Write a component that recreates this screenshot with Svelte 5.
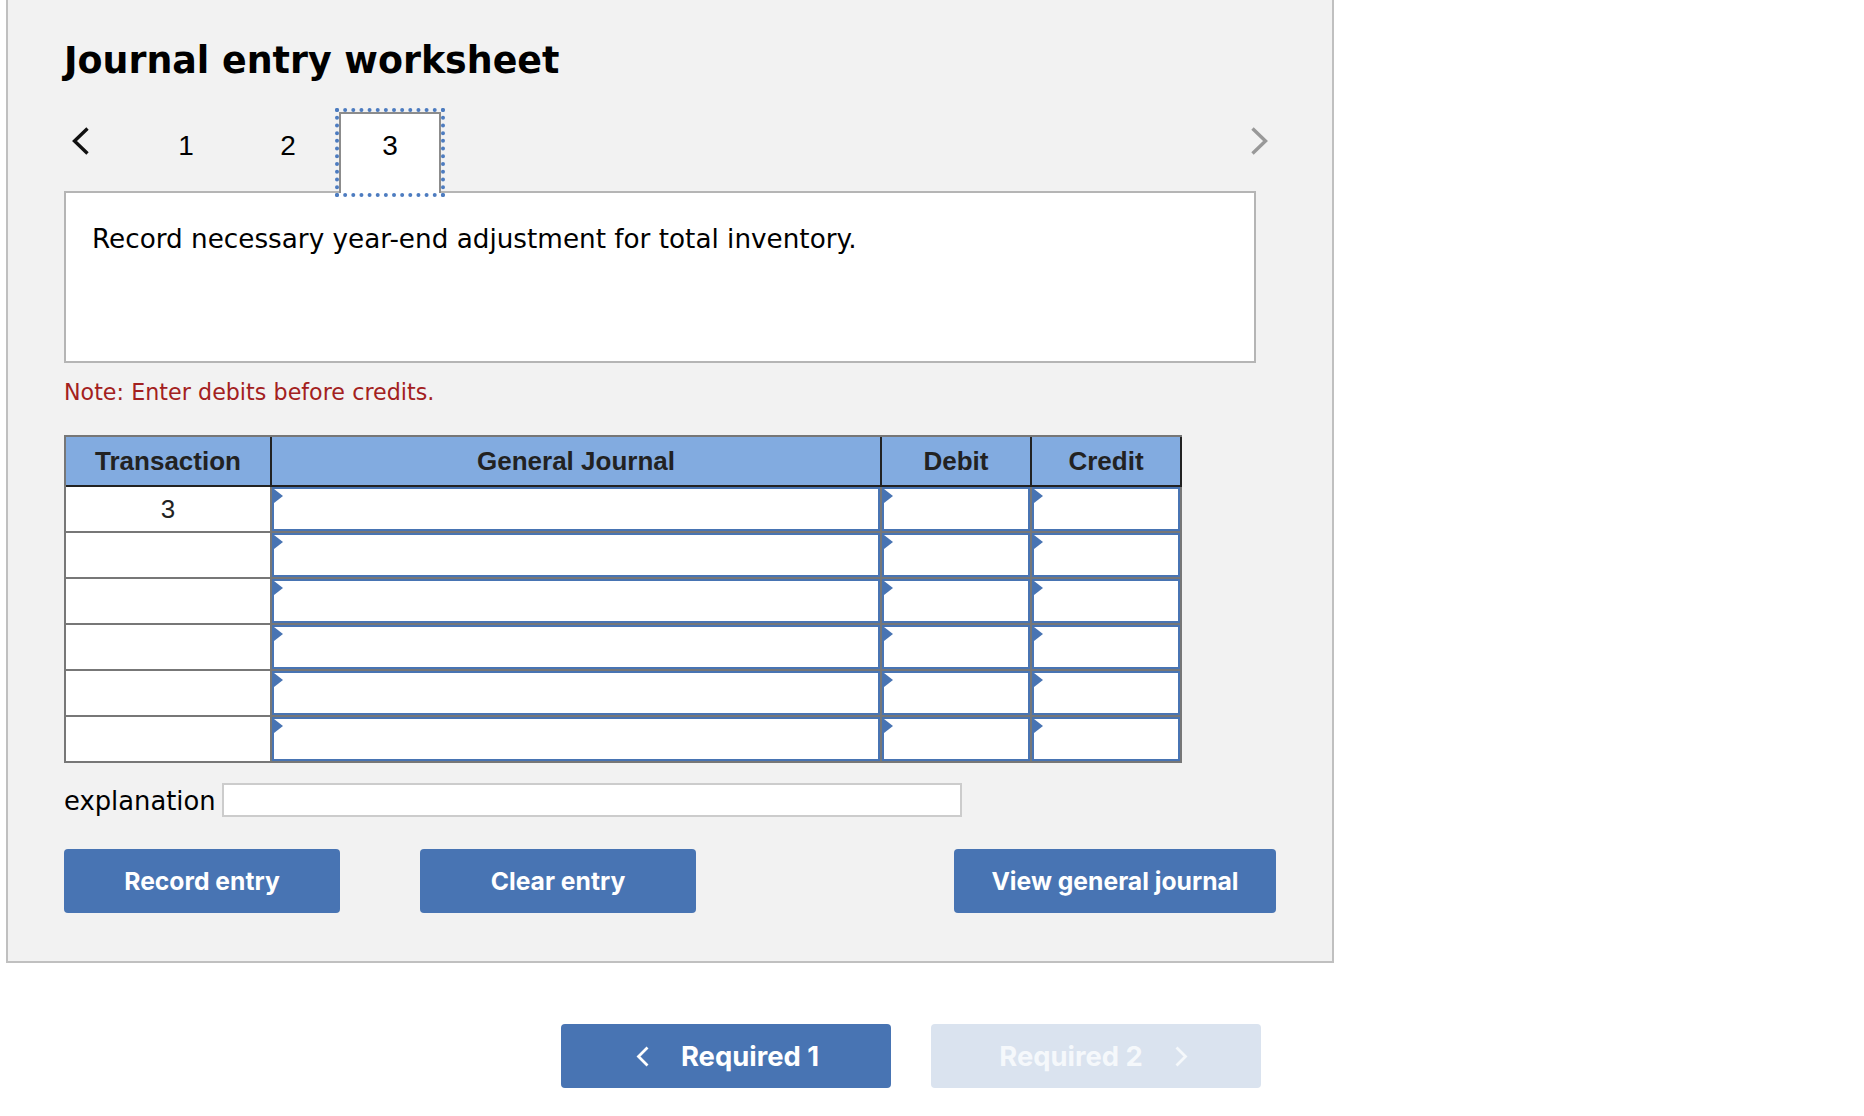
<script>
    const rows = ["3", "", "", "", "", ""];
    const tabs = [1, 2, 3];
    const current = 3;
</script>

<div class="panel">
    <h1>Journal entry worksheet</h1>

    <div class="tabs">
        <button class="arrow prev" aria-label="Previous">
            <svg width="17" height="28" viewBox="0 0 17 28"><path d="M15.5 1.5 L2.5 14 L15.5 26.5" /></svg>
        </button>
        {#each tabs as t}
            <div class="tab" class:active={t === current}>{t}</div>
        {/each}
        <button class="arrow next" aria-label="Next">
            <svg width="17" height="28" viewBox="0 0 17 28"><path d="M1.5 1.5 L14.5 14 L1.5 26.5" /></svg>
        </button>
    </div>

    <div class="question">Record necessary year-end adjustment for total inventory.</div>

    <p class="note">Note: Enter debits before credits.</p>

    <table>
        <colgroup>
            <col class="c1" /><col class="c2" /><col class="c3" /><col class="c3" />
        </colgroup>
        <thead>
            <tr>
                <th>Transaction</th>
                <th>General Journal</th>
                <th>Debit</th>
                <th>Credit</th>
            </tr>
        </thead>
        <tbody>
            {#each rows as r}
                <tr>
                    <td class="num">{r}</td>
                    <td class="entry"><input type="text" /></td>
                    <td class="entry"><input type="text" /></td>
                    <td class="entry"><input type="text" /></td>
                </tr>
            {/each}
        </tbody>
    </table>

    <div class="explain">
        <label for="explanation">explanation</label>
        <input id="explanation" type="text" />
    </div>

    <div class="actions">
        <button class="btn">Record entry</button>
        <button class="btn">Clear entry</button>
        <button class="btn view">View general journal</button>
    </div>
</div>

<div class="nav">
    <button class="btn req first">
        <svg width="13" height="21" viewBox="0 0 13 21"><path d="M11.5 1.5 L2.5 10.5 L11.5 19.5" /></svg>
        <span>Required 1</span>
    </button>
    <button class="btn req off">
        <span>Required 2</span>
        <svg width="13" height="21" viewBox="0 0 13 21"><path d="M1.5 1.5 L10.5 10.5 L1.5 19.5" /></svg>
    </button>
</div>

<style>
    :global(body) {
        background: #fff;
        font-family: "DejaVu Sans", Verdana, sans-serif;
        color: #000;
    }
    .panel {
        box-sizing: border-box;
        width: 1328px;
        margin-left: 6px;
        padding: 40px 56px 48px 56px;
        background: #f2f2f2;
        border: 2px solid #c0c0c0;
        border-top: none;
    }
    h1 {
        margin: 0 0 30px;
        font-size: 36.4px;
        line-height: 42px;
        font-weight: 700;
    }
    .tabs {
        display: flex;
        height: 81px;
        margin-bottom: -2px;
    }
    .arrow {
        background: none;
        border: none;
        padding: 0;
        height: 28px;
        margin-top: 15px;
    }
    .arrow svg {
        display: block;
    }
    .arrow path {
        fill: none;
        stroke-width: 3.4;
    }
    .prev {
        width: 71px;
        padding-left: 8px;
    }
    .prev path {
        stroke: #111;
    }
    .next {
        margin-left: auto;
        margin-right: 8px;
    }
    .next path {
        stroke: #999;
    }
    .tab {
        box-sizing: border-box;
        width: 102px;
        padding-top: 17px;
        text-align: center;
        font-family: "Liberation Sans", Arial, sans-serif;
        font-size: 28px;
        line-height: 34px;
    }
    .tab.active {
        position: relative;
        z-index: 1;
        background: #fff;
        border: 2px solid #8c8c8c;
        border-bottom: none;
        padding-top: 15px;
        outline: 4px dotted #4d7cc0;
        outline-offset: 0;
    }
    .question {
        box-sizing: border-box;
        width: 1192px;
        height: 172px;
        padding: 30px 26px;
        background: #fff;
        border: 2px solid #b5b5b5;
        font-size: 26.25px;
        line-height: 32px;
    }
    .note {
        margin: 14px 0 0;
        height: 58px;
        font-size: 22.2px;
        word-spacing: 0.2px;
        line-height: 30px;
        color: #a32020;
    }
    table {
        table-layout: fixed;
        width: 1118px;
        border-collapse: separate;
        border-spacing: 0;
        border-top: 2px solid #777;
        border-left: 2px solid #777;
        font-family: "Liberation Sans", Arial, sans-serif;
    }
    .c1 {
        width: 206px;
    }
    .c2 {
        width: 610px;
    }
    .c3 {
        width: 150px;
    }
    th {
        box-sizing: border-box;
        height: 50px;
        padding: 0;
        background: #82abe0;
        border-right: 2px solid #222;
        border-bottom: 2px solid #222;
        font-size: 26px;
        font-weight: 700;
        color: #222;
        text-align: center;
    }
    td {
        box-sizing: border-box;
        height: 46px;
        padding: 0;
        background: #fff;
        border-right: 2px solid #777;
        border-bottom: 2px solid #777;
    }
    .num {
        text-align: center;
        font-size: 26px;
        color: #222;
    }
    .entry {
        position: relative;
    }
    .entry::before {
        content: "";
        position: absolute;
        left: 2px;
        top: 2px;
        border-left: 9px solid #4874b3;
        border-top: 7px solid transparent;
        border-bottom: 7px solid transparent;
    }
    .entry input {
        display: block;
        box-sizing: border-box;
        width: 100%;
        height: 44px;
        margin: 0;
        padding: 0;
        background: #fff;
        border: 2px solid #4874b3;
        border-radius: 0;
        outline: none;
    }
    .explain {
        display: flex;
        align-items: center;
        gap: 6px;
        margin-top: 20px;
    }
    .explain label {
        padding-top: 2px;
        font-size: 25.8px;
    }
    .explain input {
        box-sizing: border-box;
        width: 740px;
        height: 34px;
        margin: 0;
        padding: 0;
        background: #fff;
        border: 2px solid #ccc;
        border-radius: 0;
    }
    .actions {
        display: flex;
        gap: 80px;
        margin-top: 32px;
    }
    .btn {
        box-sizing: border-box;
        width: 276px;
        height: 64px;
        padding: 0;
        background: #4874b3;
        border: none;
        border-radius: 4px;
        color: #fff;
        font-family: Inter, "Liberation Sans", sans-serif;
        font-size: 24.7px;
        font-weight: 700;
    }
    .btn.view {
        width: 322px;
        margin-left: auto;
    }
    .nav {
        display: flex;
        gap: 40px;
        margin: 61px 0 0 561px;
    }
    .req {
        display: flex;
        align-items: center;
        justify-content: center;
        gap: 32px;
        width: 330px;
        font-size: 27.4px;
    }
    .req.first {
        padding-left: 3px;
    }
    .req path {
        fill: none;
        stroke: #fff;
        stroke-width: 2.8;
    }
    .req.off {
        padding-right: 5px;
        background: #dae3ef;
        color: #f5f8fb;
    }
    .req.off path {
        stroke: #f5f8fb;
    }
</style>
